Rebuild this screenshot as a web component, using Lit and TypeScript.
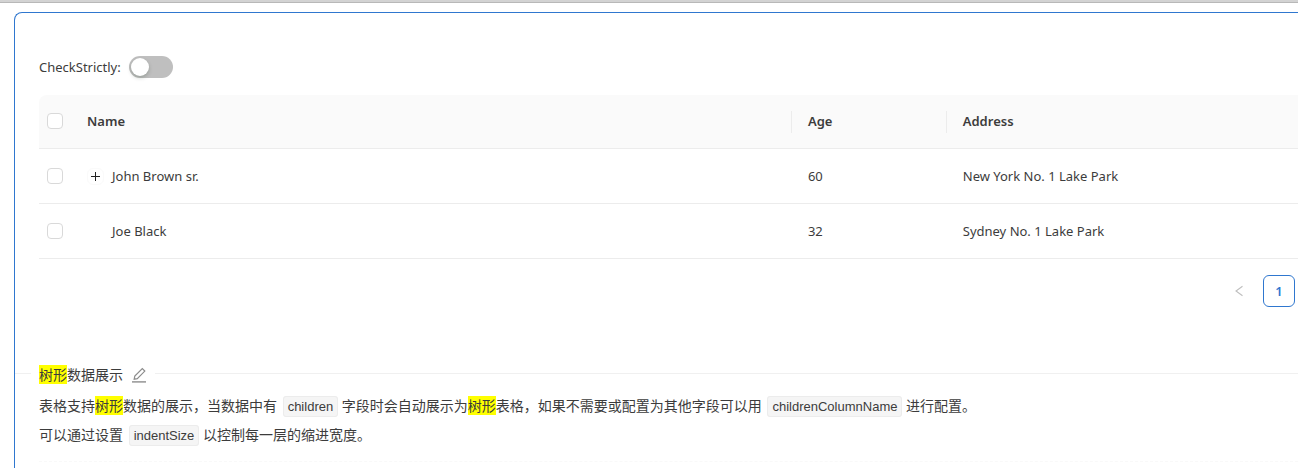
import { LitElement, html, css } from "lit";
import { customElement, state } from "lit/decorators.js";

interface Person {
  key: number;
  name: string;
  age: number;
  address: string;
  expandable: boolean;
}

const people: Person[] = [
  { key: 1, name: "John Brown sr.", age: 60, address: "New York No. 1 Lake Park", expandable: true },
  { key: 2, name: "Joe Black", age: 32, address: "Sydney No. 1 Lake Park", expandable: false },
];

@customElement("app-root")
export class AppRoot extends LitElement {
  @state() private strict = false;

  static styles = css`
    :host {
      display: block;
      overflow: hidden;
      background: #fff;
      color: #3c3c3c;
      font: 13px/22px "Noto Sans", "Open Sans", "Noto Sans CJK SC", sans-serif;
    }
    *, *::before, *::after { box-sizing: border-box; }
    button { font: inherit; padding: 0; background: none; border: 0; cursor: pointer; }
    .strip { height: 3px; background: #d3d3d3; border-bottom: 1px solid #b8b8b8; }
    .card {
      margin: 9px 0 0 14px;
      border: 1px solid #2f77cf;
      border-width: 1px 0 0 1px;
      border-radius: 8px 0 0 0;
    }
    .demo { padding: 42px 0 0 24px; }
    .toggle { display: flex; align-items: center; gap: 8px; height: 24px; margin-bottom: 16px; }
    .switch {
      appearance: none;
      display: flex;
      width: 44px;
      height: 22px;
      margin: 0;
      padding: 2px;
      border-radius: 11px;
      background: #bfbfbf;
      cursor: pointer;
    }
    .switch::before {
      content: "";
      width: 18px;
      height: 18px;
      border-radius: 50%;
      background: #fff;
      box-shadow: 0 2px 4px rgba(0, 35, 11, 0.2);
    }
    .switch:checked { background: #1677ff; justify-content: flex-end; }
    .table { width: 100%; table-layout: fixed; border-collapse: separate; border-spacing: 0; }
    .pick { width: 32px; }
    .age { width: 12.3%; }
    .address { width: 27.9%; }
    th, td { height: 55px; padding: 0 16px; text-align: left; border-bottom: 1px solid #ececec; }
    th { height: 54px; padding-bottom: 2px; background: #fafafa; font-weight: 600; }
    th:first-child { border-top-left-radius: 8px; }
    th:first-child, td:first-child { padding-left: 8px; padding-right: 8px; }
    .ruled {
      background: linear-gradient(#ececec, #ececec) right center / 1px 22px no-repeat #fafafa;
    }
    .check {
      appearance: none;
      display: block;
      width: 16px;
      height: 16px;
      margin: 0;
      border: 1px solid #d9d9d9;
      border-radius: 4px;
      background: #fff;
    }
    .check:checked { background: #1677ff; border-color: #1677ff; }
    .name { display: flex; align-items: center; gap: 8px; }
    .expand {
      display: flex;
      align-items: center;
      justify-content: center;
      width: 17px;
      height: 17px;
      border: 1px solid #fafafa;
      border-radius: 6px;
      color: #222;
    }
    .gap { width: 17px; }
    .pages { display: flex; justify-content: flex-end; align-items: center; gap: 8px; padding: 16px 3px 0 0; }
    .page { display: flex; align-items: center; justify-content: center; width: 32px; height: 32px; border-radius: 6px; color: #bfbfbf; }
    .page.current { border: 1px solid #2f77cf; color: #2f77cf; font-weight: 600; }
    .meta { padding-top: 57px; }
    .title { display: flex; align-items: center; height: 22px; font-size: 14px; }
    .title::before, .title::after { content: ""; height: 1px; margin-bottom: 3px; background: #f0f0f0; }
    .title::before { width: 16px; margin-right: 8px; }
    .title::after { flex: 1; margin-left: 8px; }
    .heading { margin: 0; font-size: 14px; font-weight: 400; line-height: 22px; }
    .edit { display: flex; margin-left: 8px; color: #8c8c8c; }
    mark { background: #ff0; color: inherit; }
    .text { padding: 5px 24px 12px; font-size: 14px; line-height: 29px; }
    .text p { margin: 0; }
    code {
      margin-left: 2px;
      padding: 2px 4px;
      border: 1px solid #ececec;
      border-radius: 3px;
      background: #f5f5f5;
      font: 13px/16px "Liberation Sans", sans-serif;
    }
    .end { border-top: 1px dashed #f9f9f9; margin-left: 24px; height: 7px; }
  `;

  render() {
    return html`
      <div class="strip"></div>
      <main class="card">
        <section class="demo">
          <div class="toggle">
            <label for="strict">CheckStrictly:</label>
            <input id="strict" class="switch" type="checkbox" role="switch" .checked=${this.strict}
              @change=${(e: Event) => (this.strict = (e.target as HTMLInputElement).checked)} />
          </div>
          <table class="table">
            <colgroup><col class="pick" /><col /><col class="age" /><col class="address" /></colgroup>
            <thead>
              <tr>
                <th><input class="check" type="checkbox" aria-label="Select all" /></th>
                <th class="ruled">Name</th>
                <th class="ruled">Age</th>
                <th>Address</th>
              </tr>
            </thead>
            <tbody>${people.map((p) => this.row(p))}</tbody>
          </table>
          <nav class="pages" aria-label="Pagination">
            <button class="page" aria-label="Previous page" disabled>
              <svg width="12" height="12" viewBox="0 0 12 12" fill="none" stroke="currentColor" stroke-width="1.1"><path d="M9.5 1.3 3 6l6.5 4.7" /></svg>
            </button>
            <button class="page current" aria-current="page">1</button>
          </nav>
        </section>
        <section class="meta">
          <div class="title">
            <h2 class="heading"><mark>树形</mark>数据展示</h2>
            <a class="edit" href="#edit" aria-label="Edit">
              <svg width="16" height="16" viewBox="0 0 16 16" fill="none" stroke="currentColor" stroke-width="1.2">
                <path d="M1 14.9h14" stroke-width="1.4" />
                <path d="M3.2 12.2l.6-3.1 7.5-7.5 2.5 2.5-7.5 7.5z" />
              </svg>
            </a>
          </div>
          <div class="text">
            <p>表格支持<mark>树形</mark>数据的展示，当数据中有 <code>children</code> 字段时会自动展示为<mark>树形</mark>表格，如果不需要或配置为其他字段可以用 <code>childrenColumnName</code> 进行配置。</p>
            <p>可以通过设置 <code>indentSize</code> 以控制每一层的缩进宽度。</p>
          </div>
          <div class="end"></div>
        </section>
      </main>
    `;
  }

  private row(p: Person) {
    return html`
      <tr>
        <td><input class="check" type="checkbox" aria-label="Select ${p.name}" /></td>
        <td>
          <div class="name">
            ${p.expandable
              ? html`<button class="expand" aria-label="Expand row">
                  <svg width="9" height="9" viewBox="0 0 9 9" stroke="currentColor"><path d="M0 4.5h9M4.5 0v9" /></svg>
                </button>`
              : html`<span class="gap"></span>`}
            <span>${p.name}</span>
          </div>
        </td>
        <td>${p.age}</td>
        <td>${p.address}</td>
      </tr>
    `;
  }
}
